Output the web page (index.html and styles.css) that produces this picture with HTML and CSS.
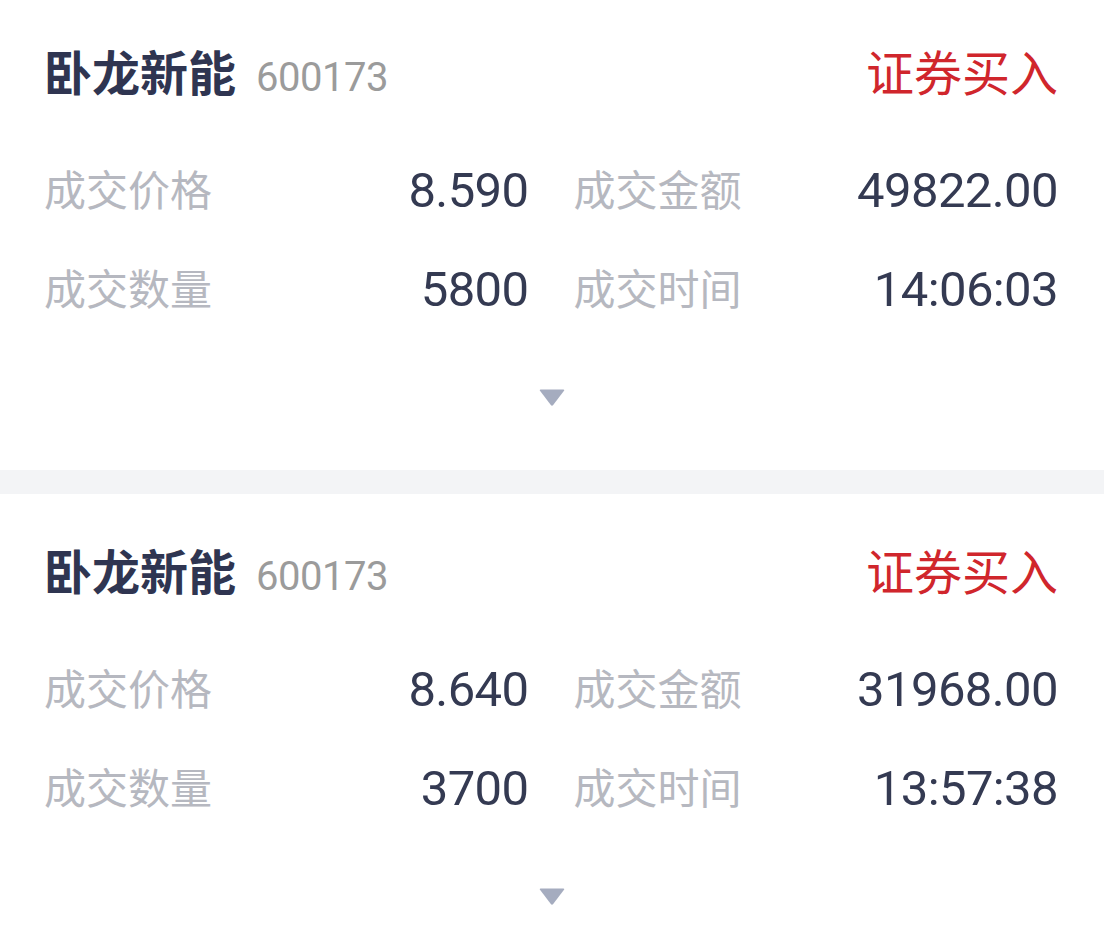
FILE: index.html
```html
<!DOCTYPE html>
<html lang="zh">
<head>
<meta charset="utf-8">
<link rel="stylesheet" href="styles.css">
</head>
<body>
<div class="list">
  <div class="card">
    <div class="head">
      <div class="name"><span class="title">卧龙新能</span><span class="code">600173</span></div>
      <span class="side">证券买入</span>
    </div>
    <div class="grid">
      <div class="cell"><span class="label">成交价格</span><span class="value">8.590</span></div>
      <div class="cell"><span class="label">成交金额</span><span class="value">49822.00</span></div>
      <div class="cell"><span class="label">成交数量</span><span class="value">5800</span></div>
      <div class="cell"><span class="label">成交时间</span><span class="value">14:06:03</span></div>
    </div>
    <div class="more"><svg width="26" height="17" viewBox="0 0 26 17"><path d="M1.5 0.5 H24.5 Q25.8 0.5 25 1.8 L14.2 16 Q13 17.3 11.8 16 L1 1.8 Q0.2 0.5 1.5 0.5 Z" fill="#a5acbf"/></svg></div>
  </div>
  <div class="gap"></div>
  <div class="card">
    <div class="head">
      <div class="name"><span class="title">卧龙新能</span><span class="code">600173</span></div>
      <span class="side">证券买入</span>
    </div>
    <div class="grid">
      <div class="cell"><span class="label">成交价格</span><span class="value">8.640</span></div>
      <div class="cell"><span class="label">成交金额</span><span class="value">31968.00</span></div>
      <div class="cell"><span class="label">成交数量</span><span class="value">3700</span></div>
      <div class="cell"><span class="label">成交时间</span><span class="value">13:57:38</span></div>
    </div>
    <div class="more"><svg width="26" height="17" viewBox="0 0 26 17"><path d="M1.5 0.5 H24.5 Q25.8 0.5 25 1.8 L14.2 16 Q13 17.3 11.8 16 L1 1.8 Q0.2 0.5 1.5 0.5 Z" fill="#a5acbf"/></svg></div>
  </div>
</div>
</body>
</html>
```
FILE: styles.css
```css
html, body {
  margin: 0;
  padding: 0;
  background: #ffffff;
  overflow: hidden;
}
body {
  font-family: "Noto Sans CJK SC", "Noto Sans", sans-serif;
}
.list {
  margin-top: -5px;
}
.card {
  background: #ffffff;
  padding: 45px 46px 64px 46px;
}
.gap {
  height: 24px;
  background: #f3f4f6;
}
.head {
  display: flex;
  justify-content: space-between;
  align-items: baseline;
  height: 60px;
}
.name {
  display: flex;
  align-items: baseline;
  gap: 20px;
  margin-left: -2px;
}
.title {
  font-size: 48px;
  line-height: 60px;
  font-weight: 700;
  color: #2f3551;
}
.code {
  font-family: Roboto, "Liberation Sans", sans-serif;
  font-size: 40px;
  line-height: 60px;
  color: #9b9b9b;
  letter-spacing: -0.5px;
}
.side {
  font-size: 48px;
  line-height: 60px;
  color: #d0262c;
}
.grid {
  margin-top: 61px;
  display: grid;
  grid-template-columns: 1fr 1fr;
  column-gap: 47px;
  row-gap: 39px;
}
.cell {
  display: flex;
  justify-content: space-between;
  align-items: center;
  height: 60px;
}
.label {
  align-self: flex-start;
  font-size: 42px;
  line-height: 54px;
  color: #b6b8c0;
  margin-left: -2px;
}
.value {
  font-family: Roboto, "Liberation Sans", sans-serif;
  font-size: 49px;
  line-height: 60px;
  color: #343a52;
  letter-spacing: -0.6px;
}
.more {
  margin-top: 69px;
  display: flex;
  justify-content: center;
  height: 17px;
}
.more svg {
  display: block;
}
```
